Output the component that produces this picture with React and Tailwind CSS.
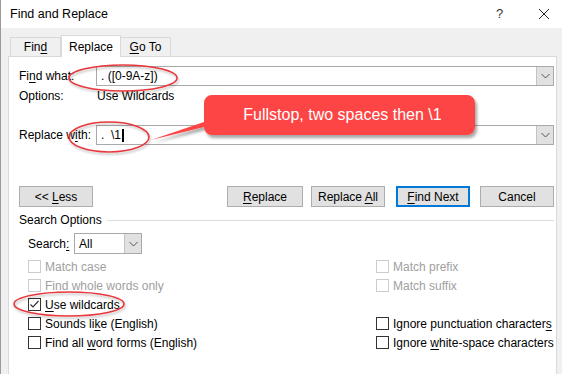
import React from "react";

const U = ({ children }) => <span className="underline underline-offset-2">{children}</span>;

function Chevron() {
  return (
    <svg width="9" height="6" viewBox="0 0 9 6" className="block">
      <path d="M0.5 1 L4.5 5 L8.5 1" fill="none" stroke="#555" strokeWidth="1" />
    </svg>
  );
}

function Combo({ value, cursor }) {
  return (
    <div className="flex-1 h-[20px] border border-[#a9a9a9] bg-white flex items-center">
      <div className="flex-1 pl-[4px] flex items-center text-black whitespace-pre">
        <span>{value}</span>
        {cursor && <span className="inline-block w-[2px] h-[13px] bg-black ml-[1px]" />}
      </div>
      <div className="w-[17px] h-[18px] bg-[#e1e1e1] border-l border-[#c4c4c4] flex items-center justify-center">
        <Chevron />
      </div>
    </div>
  );
}

function Btn({ children, primary, w = "w-[74px]" }) {
  return (
    <div
      className={`${w} h-[21px] flex items-center justify-center bg-[#e1e1e1] ${
        primary ? "border-2 border-[#0078d7]" : "border border-[#adadad]"
      }`}
    >
      <span className="whitespace-pre">{children}</span>
    </div>
  );
}

function Check({ label, disabled, checked }) {
  return (
    <div className="flex items-center gap-[4px] h-[19px] whitespace-nowrap">
      <div
        className={`w-[13px] h-[13px] shrink-0 border bg-white flex items-center justify-center ${
          disabled ? "border-[#cccccc]" : "border-[#333333]"
        }`}
      >
        {checked && (
          <svg width="11" height="11" viewBox="0 0 11 11">
            <path d="M1.5 5.5 L4 8 L9.5 2" fill="none" stroke="#333" strokeWidth="1.2" />
          </svg>
        )}
      </div>
      <span className={disabled ? "text-[#a0a0a0]" : "text-black"}>{label}</span>
    </div>
  );
}

export default function App() {
  return (
    <div
      className="relative w-[562px] h-[374px] overflow-hidden bg-[#f0f0f0] text-[12px] text-black border-l border-[#9a9a9a]"
      style={{ fontFamily: '"Liberation Sans", Arial, sans-serif' }}
    >
      {/* title bar */}
      <div className="h-[28px] bg-white flex items-center pl-[9px]">
        <span className="flex-1 text-[12.5px]">Find and Replace</span>
        <span className="w-[20px] text-[13px] text-[#333] mr-[22px]">?</span>
        <svg width="12" height="12" viewBox="0 0 12 12" className="mr-[12px]">
          <path d="M1 1 L11 11 M11 1 L1 11" stroke="#222" strokeWidth="1" />
        </svg>
      </div>

      {/* tabs */}
      <div className="flex items-end pl-[9px] h-[28px]">
        <div className="w-[51px] h-[19px] border border-b-0 border-[#d9d9d9] bg-[#f0f0f0] flex items-center justify-center">
          <span>
            Fin<U>d</U>
          </span>
        </div>
        <div className="w-[60px] h-[22px] border border-b-0 border-[#d9d9d9] bg-white flex items-center justify-center relative top-[1px] z-10">
          Replace
        </div>
        <div className="w-[50px] h-[19px] border border-b-0 border-l-0 border-[#d9d9d9] bg-[#f0f0f0] flex items-center justify-center">
          <span>
            <U>G</U>o To
          </span>
        </div>
      </div>

      {/* panel */}
      <div className="ml-[7px] w-[549px] h-[330px] bg-white border border-[#d9d9d9] pl-[10px] pr-[2px] pt-[9px]">
        <div className="flex items-center">
          <span className="w-[77px]">
            Fi<U>n</U>d what:
          </span>
          <Combo value=". ([0-9A-z])" />
        </div>
        <div className="flex items-center h-[20px]">
          <span className="w-[78px]">Options:</span>
          <span>Use Wildcards</span>
        </div>
        <div className="flex items-center mt-[19px]">
          <span className="w-[77px]">
            Replace w<U>i</U>th:
          </span>
          <Combo value={".  \\1"} cursor />
        </div>

        <div className="flex items-center mt-[41px] h-[21px]">
          <Btn>
            {"<< "}
            <U>L</U>ess
          </Btn>
          <div className="flex-1" />
          <Btn w="w-[76px]">
            <U>R</U>eplace
          </Btn>
          <div className="w-[8px]" />
          <Btn>
            {"Replace "}
            <U>A</U>ll
          </Btn>
          <div className="w-[11px]" />
          <Btn primary>
            <U>F</U>ind Next
          </Btn>
          <div className="w-[10px]" />
          <Btn>Cancel</Btn>
        </div>

        <div className="flex items-center mt-[3px] h-[20px]">
          <span>Search Options</span>
          <div className="flex-1 h-px bg-[#dcdcdc] ml-[5px]" />
        </div>

        <div className="flex items-center pl-[9px] mt-[3px]">
          <span className="w-[46px]">
            Search<U>:</U>
          </span>
          <div className="w-[68px] h-[21px] border border-[#a9a9a9] flex items-center">
            <span className="flex-1 pl-[4px]">All</span>
            <div className="w-[17px] h-[19px] bg-[#e1e1e1] border-l border-[#c4c4c4] flex items-center justify-center">
              <Chevron />
            </div>
          </div>
        </div>

        <div className="flex pl-[9px] mt-[3px]">
          <div className="w-[348px] shrink-0 flex flex-col">
            <Check label="Match case" disabled />
            <Check label="Find whole words only" disabled />
            <Check label={<><U>U</U>se wildcards</>} checked />
            <Check label={<>Sounds li<U>k</U>e (English)</>} />
            <Check label={<>Find all <U>w</U>ord forms (English)</>} />
          </div>
          <div className="flex flex-col">
            <Check label="Match prefix" disabled />
            <Check label="Match suffix" disabled />
            <div className="h-[19px]" />
            <Check label={<>Ignore punctuation character<U>s</U></>} />
            <Check label={<>Ignore <U>w</U>hite-space characters</>} />
          </div>
        </div>
      </div>

      {/* annotations overlay */}
      <svg className="absolute left-0 top-0 pointer-events-none" width="562" height="374">
        <defs>
          <filter id="sh" x="-10%" y="-10%" width="130%" height="140%">
            <feDropShadow dx="2" dy="3" stdDeviation="1.5" floodColor="#000" floodOpacity="0.35" />
          </filter>
          <filter id="sh2" x="-10%" y="-20%" width="130%" height="150%">
            <feDropShadow dx="1" dy="2" stdDeviation="1" floodColor="#000" floodOpacity="0.25" />
          </filter>
        </defs>
        <g filter="url(#sh2)" fill="none" stroke="#e8393d" strokeWidth="1.6">
          <ellipse cx="122" cy="78" rx="54" ry="13" />
          <ellipse cx="108" cy="137" rx="40" ry="15" />
          <ellipse cx="68" cy="304" rx="55" ry="12" />
        </g>
        <g filter="url(#sh)">
          <path
            d="M211 95 H466 A8 8 0 0 1 474 103 V127 A8 8 0 0 1 466 135 H211 A8 8 0 0 1 203 127 L150 140 L203 122 V103 A8 8 0 0 1 211 95 Z"
            fill="#fe4444"
          />
        </g>
      </svg>
      <div
        className="absolute left-[203px] top-[95px] w-[271px] h-[40px] flex items-center justify-center text-white text-[16px] pl-[6px]"
        style={{ fontFamily: '"Liberation Sans", Arial, sans-serif' }}
      >
        Fullstop, two spaces then \1
      </div>
    </div>
  );
}
